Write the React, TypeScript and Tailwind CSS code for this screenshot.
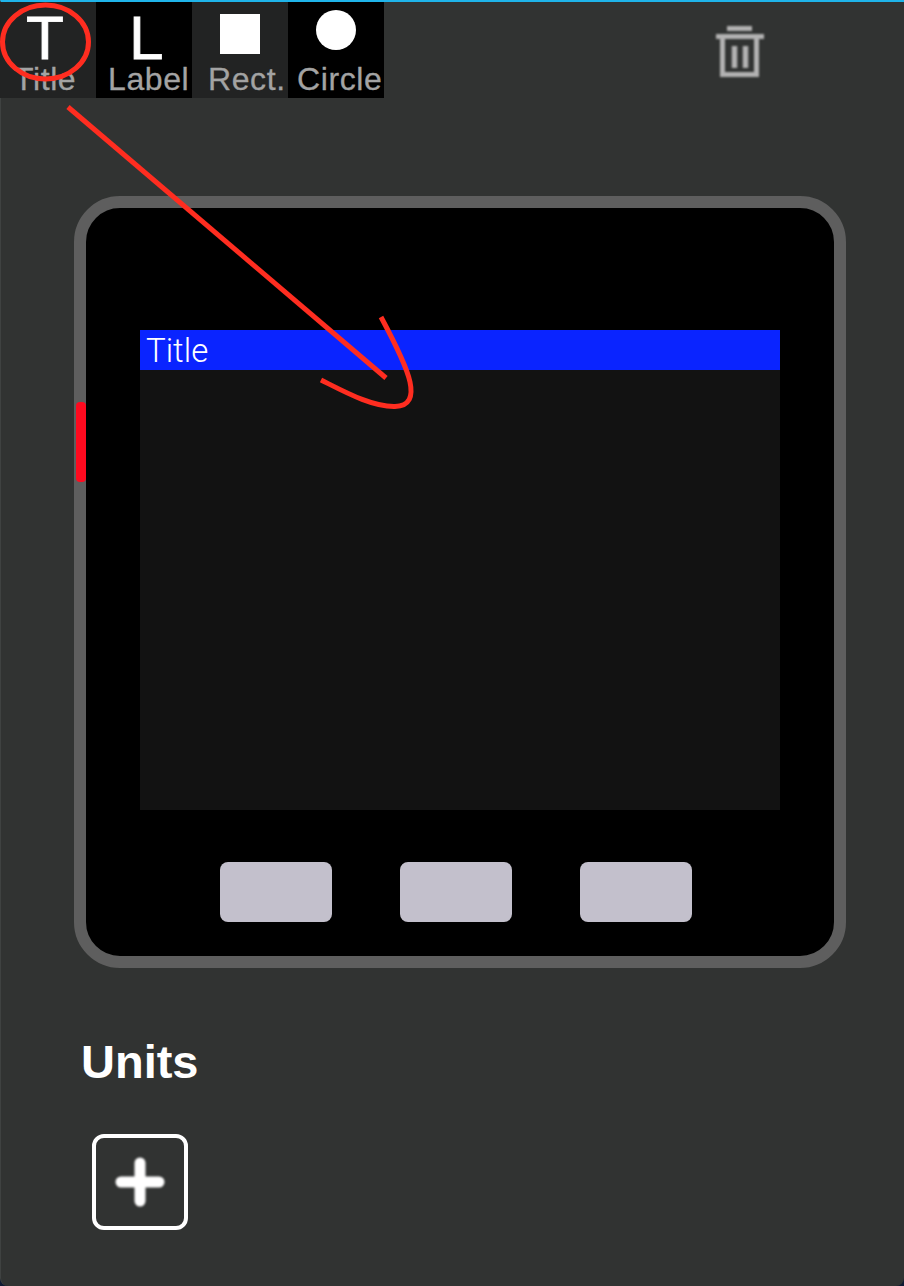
import React from "react";

const palette = [
  { label: "Title", bg: "bg-[#222323]", text: "pl-[14px]" },
  { label: "Label", bg: "bg-black", text: "pl-3" },
  { label: "Rect.", bg: "bg-[#222323]", text: "pl-4" },
  { label: "Circle", bg: "bg-black", text: "pl-[9px]" },
];

function Glyph({ i }: { i: number }) {
  if (i === 0)
    return <span className="block h-[60px] pl-[26px] text-[62px] leading-[72px] text-white [-webkit-text-stroke:0.8px_white]">T</span>;
  if (i === 1)
    return <span className="block h-[60px] pl-[33px] text-[62px] leading-[72px] text-white [-webkit-text-stroke:0.8px_white]">L</span>;
  if (i === 2)
    return (
      <div className="flex h-[60px] justify-center pt-3">
        <div className="h-10 w-10 bg-white" />
      </div>
    );
  return (
    <div className="flex h-[60px] justify-center pt-2">
      <div className="h-10 w-10 rounded-full bg-white" />
    </div>
  );
}

export default function App() {
  return (
    <div className="relative h-[1286px] w-[904px] overflow-hidden bg-[#0f1a33] font-['Liberation_Sans',sans-serif]">
      <div className="flex h-full flex-col rounded-b-lg border-t-2 border-l border-t-[#1fb4ea] border-l-[#3f4241] bg-[#313332]">
        <div className="flex items-start">
          <div className="-ml-px flex">
            {palette.map((p, i) => (
              <div key={p.label} className={`h-24 w-24 ${p.bg}`}>
                <Glyph i={i} />
                <div className={`${p.text} text-[32px] leading-[35px] tracking-[0.6px] whitespace-nowrap text-[#a3a3a3] [-webkit-text-stroke:0.3px_#a3a3a3]`}>{p.label}</div>
              </div>
            ))}
          </div>
          <svg className="mt-[22px] ml-[330px] blur-[0.8px]" width="52" height="56" viewBox="0 0 52 56" fill="none" stroke="#b2b2b2">
            <path d="M13 4.500h25" strokeWidth="5" />
            <path d="M2 12.500h48" strokeWidth="5" />
            <path d="M8.500 14v36.500h34V14" strokeWidth="5" />
            <path d="M20.500 22v22M31.500 22v22" strokeWidth="5.500" />
          </svg>
        </div>

        <div className="mt-[98px] ml-[73px] flex h-[772px] w-[772px] flex-col items-center rounded-[46px] border-[12px] border-[#5e5e5e] bg-black">
          <div className="mt-[122px] h-[480px] w-[640px] bg-[#121212]">
            <div className="h-10 bg-[#0a24ff] pl-1.5 font-['Roboto',sans-serif] text-[33px] leading-[42px] font-light text-white">Title</div>
          </div>
          <div className="mt-[52px] mr-2 flex gap-[68px]">
            <div className="h-[60px] w-28 rounded-lg bg-[#c3c0cc]" />
            <div className="h-[60px] w-28 rounded-lg bg-[#c3c0cc]" />
            <div className="h-[60px] w-28 rounded-lg bg-[#c3c0cc]" />
          </div>
        </div>

        <h2 className="mt-[68px] ml-[80px] text-[47px] leading-[52px] font-bold text-white">Units</h2>
        <div className="mt-[46px] ml-[91px] flex h-24 w-24 items-center justify-center rounded-xl border-4 border-white">
          <svg className="blur-[1px]" width="50" height="50" viewBox="0 0 50 50" fill="none" stroke="#fff" strokeWidth="11" strokeLinecap="round">
            <path d="M6 25h38M25 6v38" />
          </svg>
        </div>
      </div>

      <div className="absolute top-[402px] left-[76px] h-20 w-2.5 rounded-[4px] bg-[#ff0a1f]" />

      <svg className="pointer-events-none absolute inset-0" width="904" height="1286" viewBox="0 0 904 1286" fill="none" stroke="#ff2d20" strokeWidth="5">
        <ellipse cx="45.500" cy="42" rx="43" ry="37" />
        <path d="M68 107L386 378" />
        <path d="M321 380C345 392 372 407 395 406.500C410 406 413 396 410 382C407 368 396 345 381 317" />
      </svg>
    </div>
  );
}
